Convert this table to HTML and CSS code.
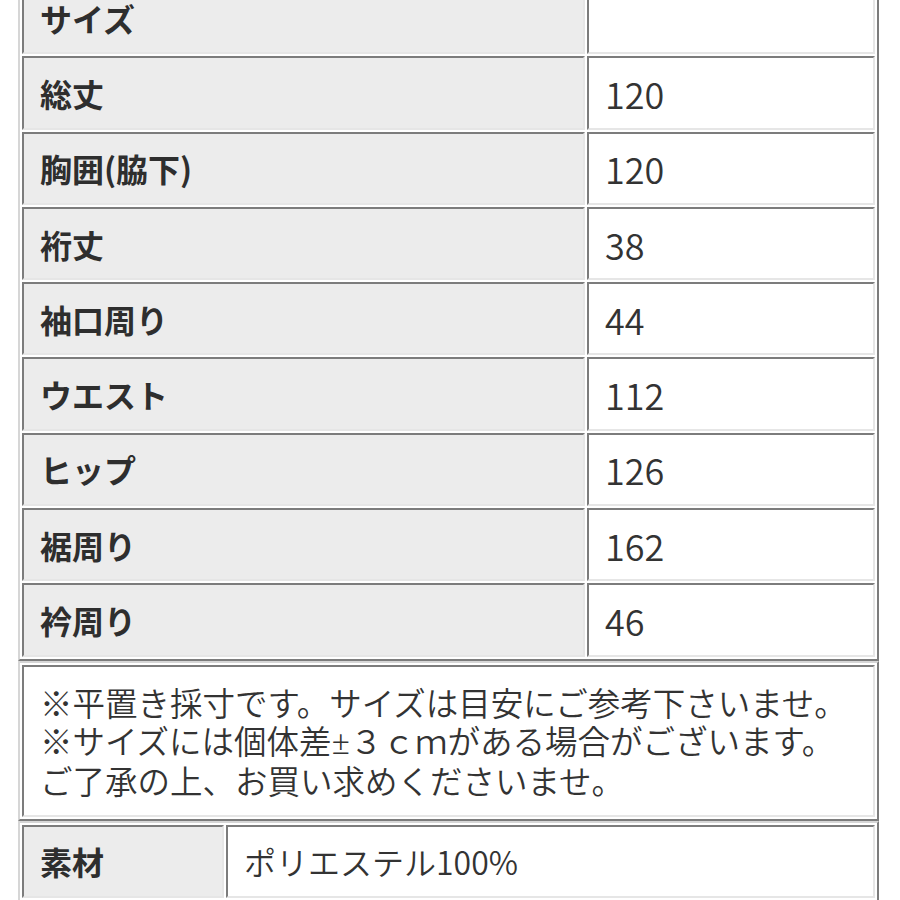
FILE: index.html
```html
<!DOCTYPE html>
<html lang="ja">
<head>
<meta charset="utf-8">
<link rel="stylesheet" href="styles.css">
</head>
<body>
<div class="page">
  <table class="spec size-table">
    <tbody>
      <tr><th>サイズ</th><td></td></tr>
      <tr><th>総丈</th><td>120</td></tr>
      <tr><th>胸囲(脇下)</th><td>120</td></tr>
      <tr><th>裄丈</th><td>38</td></tr>
      <tr><th>袖口周り</th><td>44</td></tr>
      <tr><th>ウエスト</th><td>112</td></tr>
      <tr><th>ヒップ</th><td>126</td></tr>
      <tr><th>裾周り</th><td>162</td></tr>
      <tr><th>衿周り</th><td>46</td></tr>
    </tbody>
  </table>
  <table class="spec note-table">
    <tbody>
      <tr><td class="note">※平置き採寸です。サイズは目安にご参考下さいませ。<br>※サイズには個体差<span class="pm">±</span>３ｃｍがある場合がございます。<br>ご了承の上、お買い求めくださいませ。</td></tr>
    </tbody>
  </table>
  <table class="spec material-table">
    <tbody>
      <tr><th>素材</th><td class="mat">ポリエステル100%</td></tr>
    </tbody>
  </table>
</div>
</body>
</html>
```

FILE: styles.css
```css
html, body {
  margin: 0;
  padding: 0;
  background: #ffffff;
}
body {
  font-family: "Noto Sans CJK JP", "Noto Sans", sans-serif;
  color: #333333;
  overflow: hidden;
}
.page {
  padding-left: 18px;
  width: 861px;
}
.spec {
  width: 861px;
  border-collapse: separate;
  border-spacing: 2px;
  border-style: solid;
  border-width: 2px;
  border-color: #d6d6d6 #7c7c7c #7c7c7c #d6d6d6;
  table-layout: fixed;
}
.size-table {
  margin-top: -23px;
}
.spec th,
.spec td {
  box-sizing: border-box;
  height: 73.3px;
  padding: 0 16px;
  border-style: solid;
  border-width: 2px;
  border-color: #7c7c7c #e6e6e6 #e6e6e6 #7c7c7c;
  text-align: left;
  vertical-align: middle;
}
.spec th {
  background: #ececec;
  font-size: 32px;
  font-weight: 700;
  color: #2e2e2e;
}
.spec td {
  background: #ffffff;
  font-size: 36px;
  font-weight: 350;
  color: #333333;
}
.size-table th {
  width: 563px;
}
.spec td.note {
  height: 152px;
  font-size: 32.5px;
  line-height: 38px;
  padding: 0 16px;
  color: #333333;
  white-space: nowrap;
}
.pm {
  font-family: "Noto Sans", "DejaVu Sans", sans-serif;
}
.material-table th {
  width: 202px;
}
.spec td.mat {
  font-size: 32px;
}
```
